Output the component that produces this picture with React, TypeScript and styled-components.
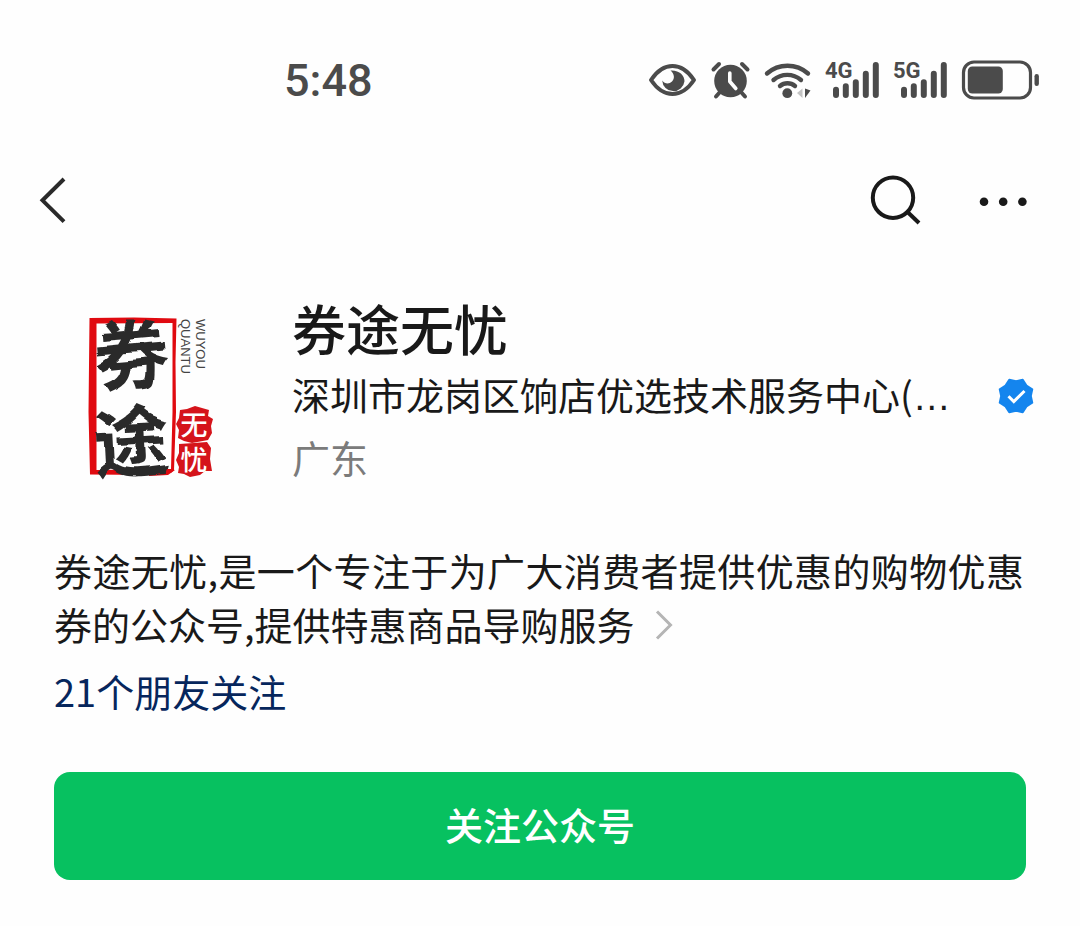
import React from "react";
import styled, { createGlobalStyle } from "styled-components";

const GlobalStyle = createGlobalStyle`
  *, *::before, *::after { box-sizing: border-box; }
  body {
    margin: 0;
    background: #fefefe;
    color: #191919;
    font-family: "Noto Sans CJK SC", "Noto Sans", sans-serif;
    font-size: 38px;
    line-height: 54px;
  }
`;

const Page = styled.div`
  display: flex;
  flex-direction: column;
  padding-bottom: 44px;
`;

const StatusBar = styled.header`
  display: flex;
  align-items: center;
  justify-content: space-between;
  height: 160px;
  padding: 0 41px 0 284px;
  color: #4b4b4b;
`;

const Clock = styled.time`
  padding-top: 2px;
  font-family: Roboto, sans-serif;
  font-size: 45px;
  font-weight: 500;
  line-height: 56px;
`;

const StatusIcons = styled.div`
  display: flex;
  align-items: center;
  gap: 15px;
`;

const Icon = styled.svg`
  display: block;
  flex: none;
  overflow: visible;
`;

const NavBar = styled.nav`
  display: flex;
  align-items: center;
  justify-content: space-between;
  height: 80px;
  padding: 0 50px 0 38px;
`;

const NavActions = styled.div`
  display: flex;
  align-items: center;
  gap: 56px;
`;

const IconButton = styled.button`
  display: flex;
  padding: 0;
  border: 0;
  background: none;
  color: inherit;
  cursor: pointer;
`;

const Profile = styled.section`
  display: flex;
  gap: 46px;
  padding: 52px 46px 0 54px;
`;

const Avatar = styled.svg`
  display: block;
  flex: none;
  margin-top: 10px;
  overflow: visible;
`;

const ProfileText = styled.div`
  flex: 1;
  min-width: 0;
`;

const Name = styled.h1`
  margin: 0;
  font-size: 54px;
  font-weight: 500;
  line-height: 72px;
`;

const OrgRow = styled.div`
  display: flex;
  align-items: center;
  justify-content: space-between;
  line-height: 60px;
  white-space: nowrap;
`;

const Dots = styled.span`
  font-family: "Liberation Sans", sans-serif;
`;

const Region = styled.p`
  margin: 0;
  color: #7b7b7b;
  line-height: 60px;
`;

const Details = styled.section`
  padding: 49px 54px 0;
`;

const Description = styled.p`
  margin: 0;
  padding-right: 2px;
  text-align: justify;
`;

const MoreButton = styled(IconButton)`
  display: inline-flex;
  margin-left: 20px;
`;

const Friends = styled.a`
  display: block;
  width: fit-content;
  margin-top: 13px;
  color: #06265c;
  text-decoration: none;
`;

const FollowButton = styled.button`
  width: 100%;
  height: 108px;
  margin-top: 54px;
  padding: 0 0 4px;
  border: 0;
  border-radius: 16px;
  background: #07c160;
  color: #fff;
  font: inherit;
  font-weight: 500;
  cursor: pointer;
`;

const EyeIcon = () => (
  <Icon width="47" height="40" viewBox="0 0 47 40" aria-hidden="true">
    <path d="M2 20C8 11 15 6 23.500 6S39 11 45 20C39 29 32 34 23.500 34S8 29 2 20Z" fill="none" stroke="currentColor" strokeWidth="4" strokeLinejoin="round" />
    <path d="M21.500 10.500C30.500 10 35.500 15.500 35.500 21.300A11.200 11.200 0 0 1 13.200 20.500C15.500 23.800 20 24.500 23 21.500C26 18.500 25.500 14 21.500 10.500Z" fill="currentColor" />
  </Icon>
);

const AlarmIcon = () => (
  <Icon width="39" height="40" viewBox="0 0 39 40" aria-hidden="true">
    <circle cx="19.500" cy="21" r="16.300" fill="currentColor" />
    <path d="M2.500 9.500L8 4M31 4l5.500 5.500M9 32l-4 4.500M30 32l4 4.500" fill="none" stroke="currentColor" strokeWidth="4" strokeLinecap="round" />
    <path d="M18.800 13v8.500l6 7" fill="none" stroke="#fefefe" strokeWidth="3.600" strokeLinecap="round" strokeLinejoin="round" />
  </Icon>
);

const WifiIcon = () => (
  <Icon width="46" height="40" viewBox="0 0 46 40" aria-hidden="true">
    <g fill="none" stroke="currentColor" strokeWidth="4.400" strokeLinecap="round">
      <path d="M2 13.500A31 31 0 0 1 43 13.500" />
      <path d="M8.500 20A21 21 0 0 1 36 20" />
      <path d="M15 26A11.500 11.500 0 0 1 30 26" />
    </g>
    <circle cx="22.300" cy="33.200" r="4.900" fill="currentColor" />
    <path d="M37.500 28.500v9.500l-5.500-5Z" fill="#c4c4c4" />
    <path d="M40 28.500v9.500l5.500-7.500Z" fill="currentColor" />
  </Icon>
);

const SignalIcon = ({ label }: { label: string }) => (
  <Icon width="53" height="40" viewBox="0 0 53 40" role="img" aria-label={label}>
    <text x="-1" y="18" fontFamily="Roboto, sans-serif" fontSize="22" fontWeight="700" fill="currentColor">
      {label}
    </text>
    <path d="M10 29.700V35M19.800 26.300V35M29.800 22.300V35M39.800 13.700V35M49.800 5V35" stroke="currentColor" strokeWidth="6" strokeLinecap="round" />
  </Icon>
);

const BatteryIcon = () => (
  <Icon width="77" height="40" viewBox="0 0 77 40" aria-hidden="true">
    <rect x="1.500" y="2" width="67" height="36" rx="10.500" fill="none" stroke="currentColor" strokeWidth="3.200" />
    <rect x="5.800" y="6.500" width="35" height="27" rx="4.500" fill="currentColor" />
    <rect x="72.500" y="14" width="4.400" height="12" rx="2.200" fill="currentColor" />
  </Icon>
);

const VerifiedIcon = () => {
  const points = Array.from({ length: 16 }, (_, i) => {
    const r = i % 2 === 0 ? 17.6 : 14.8;
    const a = ((22.5 + i * 22.5) * Math.PI) / 180;
    return `${(18 + r * Math.cos(a)).toFixed(2)},${(18 + r * Math.sin(a)).toFixed(2)}`;
  }).join(" ");
  return (
    <Icon width="36" height="36" viewBox="0 0 36 36" role="img" aria-label="已认证">
      <polygon points={points} fill="#1485ee" stroke="#1485ee" strokeWidth="2" strokeLinejoin="round" />
      <path d="M10.500 18.300l5.300 5.300L26.500 13" fill="none" stroke="#fff" strokeWidth="3" />
    </Icon>
  );
};

const BrandLogo = () => (
  <Avatar width="192" height="192" viewBox="0 0 192 192" role="img" aria-label="券途无忧">
    <defs>
      <filter id="brush" x="-10%" y="-10%" width="120%" height="120%">
        <feTurbulence type="fractalNoise" baseFrequency="0.04" numOctaves="1" seed="7" result="noise" />
        <feDisplacementMap in="SourceGraphic" in2="noise" scale="9" xChannelSelector="R" yChannelSelector="G" />
      </filter>
    </defs>
    <path d="M35.500 16L80 15.500L122.500 16.500L121.500 60L122 110L120 168L117.500 170.500L95 173L36 172.500L34.500 110ZM42.500 21.500L42.500 168L117 167L118.500 110L118.500 21Z" fill="#e00a10" fillRule="evenodd" />
    <path d="M95 168L116 167L121 168L114 173L95 174Z" fill="#e00a10" />
    <g fill="#2b2b2b" fontFamily="'Noto Sans CJK SC', sans-serif" fontWeight="700" fontSize="76" textAnchor="middle" filter="url(#brush)">
      <text x="78" y="82" transform="rotate(-5 78 54)">券</text>
      <text x="77" y="169" transform="rotate(-3 77 140)">途</text>
    </g>
    <g fill="#d5141b">
      <path d="M126 108L133 107L141 104L155 108L154 114L159 117L157 124L158 131L154 138L138 141L130 139L124 136L125 128L122 122L125 116Z" />
      <path d="M125 142L140 141L153 140L157 146L156 157L158 169L151 169L146 173L136 175L130 172L124 171L125 165L122 158L125 151Z" />
    </g>
    <text fill="#fff" fontFamily="'Noto Sans CJK SC', sans-serif" fontWeight="500" fontSize="27" textAnchor="middle">
      <tspan x="140" y="133">无</tspan>
      <tspan x="140" y="168">忧</tspan>
    </text>
    <g fill="#444" fontFamily="'Liberation Sans', sans-serif" fontSize="13">
      <text transform="translate(142 17) rotate(90)">WUYOU</text>
      <text transform="translate(127 17) rotate(90)">QUANTU</text>
    </g>
  </Avatar>
);

export default function App() {
  return (
    <Page lang="zh-CN">
      <GlobalStyle />
      <StatusBar>
        <Clock>5:48</Clock>
        <StatusIcons>
          <EyeIcon />
          <AlarmIcon />
          <WifiIcon />
          <SignalIcon label="4G" />
          <SignalIcon label="5G" />
          <BatteryIcon />
        </StatusIcons>
      </StatusBar>

      <NavBar>
        <IconButton aria-label="返回">
          <Icon width="30" height="50" viewBox="0 0 30 50">
            <path d="M26 4L4.500 25.300L26 46.600" fill="none" stroke="#2a2a2a" strokeWidth="4" />
          </Icon>
        </IconButton>
        <NavActions>
          <IconButton aria-label="搜索">
            <Icon width="52" height="52" viewBox="0 0 52 52">
              <g fill="none" stroke="#191919" strokeWidth="4">
                <circle cx="25" cy="23.700" r="20.200" />
                <path d="M39 37.500L51 49" />
              </g>
            </Icon>
          </IconButton>
          <IconButton aria-label="更多">
            <Icon width="54" height="50" viewBox="0 0 54 50" fill="#191919">
              <circle cx="8" cy="26.700" r="4.300" />
              <circle cx="27.200" cy="26.700" r="4.300" />
              <circle cx="46.400" cy="26.700" r="4.300" />
            </Icon>
          </IconButton>
        </NavActions>
      </NavBar>

      <main>
        <Profile>
          <BrandLogo />
          <ProfileText>
            <Name>券途无忧</Name>
            <OrgRow>
              <span>
                深圳市龙岗区饷店优选技术服务中心(<Dots>…</Dots>
              </span>
              <VerifiedIcon />
            </OrgRow>
            <Region>广东</Region>
          </ProfileText>
        </Profile>

        <Details>
          <Description>
            券途无忧,是一个专注于为广大消费者提供优惠的购物优惠券的公众号,提供特惠商品导购服务
            <MoreButton aria-label="展开">
              <Icon width="18" height="30" viewBox="0 0 18 30">
                <path d="M2 1.500L15.500 15L2 28.500" fill="none" stroke="#b5b5b5" strokeWidth="3" />
              </Icon>
            </MoreButton>
          </Description>
          <Friends href="#friends">21个朋友关注</Friends>
          <FollowButton>关注公众号</FollowButton>
        </Details>
      </main>
    </Page>
  );
}
